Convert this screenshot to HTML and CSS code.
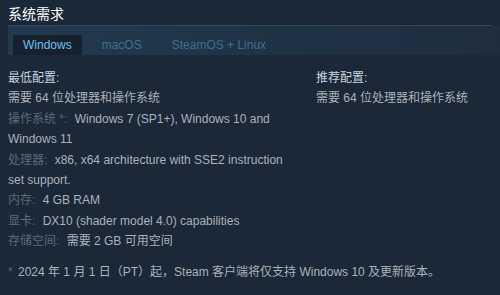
FILE: index.html
```html
<!DOCTYPE html>
<html lang="zh-CN">
<head>
    <meta charset="UTF-8">
    <title>系统需求</title>
    <link rel="stylesheet" href="styles.css">
</head>
<body>
    <h2 class="title">系统需求</h2>

    <div class="tabs">
        <div class="tab active">Windows</div>
        <div class="tab">macOS</div>
        <div class="tab">SteamOS + Linux</div>
    </div>

    <div class="req">
        <div class="col">
            <div class="head">最低配置:</div>
            <div>需要 64 位处理器和操作系统</div>
            <div><span class="key">操作系统 *:</span> Windows 7 (SP1+), Windows 10 and Windows 11</div>
            <div><span class="key">处理器:</span> x86, x64 architecture with SSE2 instruction set support.</div>
            <div><span class="key">内存:</span> 4 GB RAM</div>
            <div><span class="key">显卡:</span> DX10 (shader model 4.0) capabilities</div>
            <div><span class="key">存储空间:</span> 需要 2 GB 可用空间</div>
        </div>
        <div class="col">
            <div class="head">推荐配置:</div>
            <div>需要 64 位处理器和操作系统</div>
        </div>
    </div>

    <p class="note"><span class="key">*</span> 2024 年 1 月 1 日（PT）起，Steam 客户端将仅支持 Windows 10 及更新版本。</p>
</body>
</html>
```

FILE: styles.css
```css
body {
    margin: 0;
    padding: 4px 8px 0;
    background: #1b2838;
    color: #acb2b8;
    font-family: "Liberation Sans", Arial, "Noto Sans CJK SC", sans-serif;
    font-size: 12px;
    line-height: 1.7;
}
.title {
    margin: 0;
    font-size: 14px;
    font-weight: normal;
    line-height: 21px;
    color: #fff;
    border-bottom: 1px solid #2d4a62;
}
.tabs {
    display: flex;
    gap: 10px;
    padding: 9px 0 0 5px;
    margin-right: -8px;
    background: linear-gradient(90deg, #223a4f 0%, #1f3244 60%, #1e2e3f 100%);
}
.tab {
    padding: 0 10px;
    height: 20px;
    line-height: 20px;
    color: #3f6f91;
}
.tab.active {
    background: #17212e;
    color: #67c1f5;
}
.req {
    display: grid;
    grid-template-columns: 286px 1fr;
    column-gap: 22px;
    margin-top: 13px;
}
.head { color: #c6d4df; }
.key {
    margin-right: 4px;
    color: #5d6a76;
}
.note {
    margin: 10px 0 0;
}
.note .key { margin-right: 2px; }
```
